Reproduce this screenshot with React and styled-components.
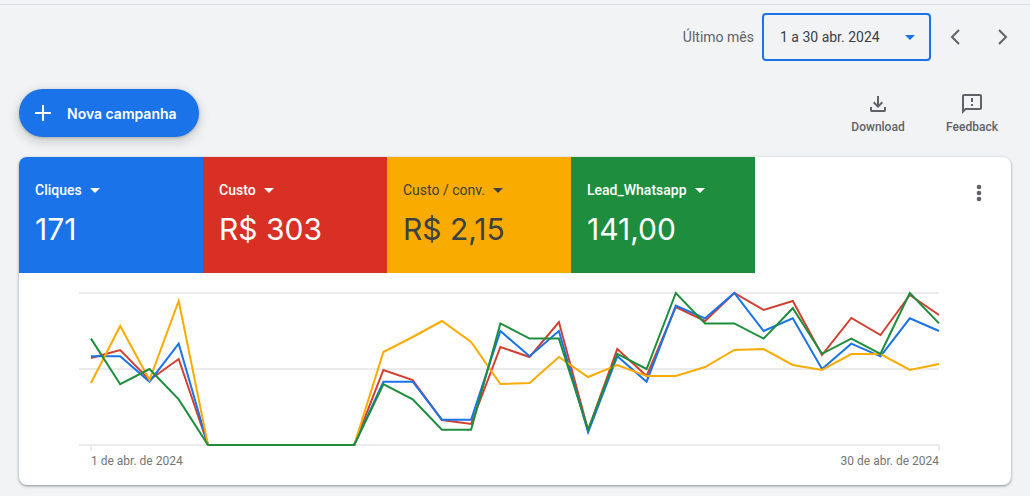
import React, { useState } from 'react'
import styled, { createGlobalStyle } from 'styled-components'

const GlobalStyle = createGlobalStyle`
  * {
    box-sizing: border-box;
  }

  body {
    margin: 0;
    background: #f1f3f4;
    font-family: Roboto, "Liberation Sans", sans-serif;
    font-size: 14px;
    color: #5f6368;
  }

  button,
  select {
    margin: 0;
    padding: 0;
    border: 0;
    background: none;
    color: inherit;
    font: inherit;
    cursor: pointer;
  }

  svg {
    display: block;
    flex: none;
  }
`

const Page = styled.main`
  margin-top: 4px;
  padding-bottom: 11px;
  border-top: 1px solid #dadce0;
`

const DateBar = styled.div`
  display: flex;
  align-items: center;
  justify-content: flex-end;
  padding: 8px 3px 0 20px;
`

const DateLabel = styled.label`
  margin-right: 8px;
`

const Dropdown = styled.div`
  display: inline-grid;
  align-items: center;

  select,
  svg {
    grid-area: 1 / 1;
  }

  select {
    appearance: none;
    outline: none;
    line-height: 20px;
  }

  svg {
    justify-self: end;
    pointer-events: none;
  }
`

const DateDropdown = styled(Dropdown)`
  width: 169px;
  height: 48px;
  border: 2px solid #1a73e8;
  border-radius: 4px;
  color: #1a73e8;

  select {
    height: 44px;
    padding-left: 16px;
    color: #3c4043;
  }

  svg {
    margin-right: 14px;
  }
`

const ArrowButton = styled.button`
  display: grid;
  place-items: center;
  width: 48px;
  height: 48px;
`

const ActionBar = styled.div`
  display: flex;
  align-items: center;
  justify-content: space-between;
  padding: 28px 31px 20px 19px;
`

const NewCampaign = styled.button`
  display: flex;
  align-items: center;
  gap: 16px;
  height: 48px;
  padding: 0 22px 0 16px;
  border-radius: 24px;
  background: #1a73e8;
  box-shadow: 0 1px 3px rgba(60, 64, 67, 0.3), 0 4px 8px 3px rgba(60, 64, 67, 0.15);
  color: #fff;
  font-family: Inter, sans-serif;
  font-weight: 600;
`

const Actions = styled.div`
  display: flex;
  gap: 40px;
  padding-top: 1px;
`

const Action = styled.button`
  display: flex;
  flex-direction: column;
  align-items: center;
  gap: 3px;
  min-width: 54px;
  font-size: 12px;
  font-weight: 500;
  line-height: 16px;
`

const Card = styled.section`
  margin: 0 19px;
  border-radius: 8px;
  background: #fff;
  box-shadow: 0 1px 2px rgba(60, 64, 67, 0.4), 0 1px 3px 1px rgba(60, 64, 67, 0.15);
  overflow: hidden;
`

const Metrics = styled.div`
  display: flex;
  align-items: flex-start;
`

const Metric = styled.div`
  flex: 0 1 184px;
  height: 116px;
  padding: 23px 16px;
  background: ${props => props.$color};
  color: ${props => (props.$dark ? '#3c4043' : '#fff')};

  select {
    padding-right: 18px;
    font-weight: ${props => (props.$dark ? 400 : 500)};
  }

  option {
    color: #3c4043;
  }
`

const MetricValue = styled.div`
  margin-top: 9px;
  font-family: Inter, sans-serif;
  font-size: 30px;
  line-height: 40px;
  white-space: nowrap;
`

const MoreButton = styled.button`
  display: grid;
  place-items: center;
  width: 40px;
  height: 40px;
  margin: 16px 12px 0 auto;
`

const Chart = styled.div`
  padding: 16px 72px 14px 60px;
`

const Plot = styled.svg`
  width: 100%;
  height: 162px;
  overflow: visible;

  path {
    fill: none;
    vector-effect: non-scaling-stroke;
  }
`

const Dates = styled.div`
  display: flex;
  justify-content: space-between;
  padding-left: 12px;
  color: #757575;
  font-size: 12px;
  line-height: 20px;
`

const metrics = [
  { name: 'Cliques', value: '171', color: '#1a73e8' },
  { name: 'Custo', value: 'R$ 303', color: '#d93025' },
  { name: 'Custo / conv.', value: 'R$ 2,15', color: '#f9ab00', dark: true },
  { name: 'Lead_Whatsapp', value: '141,00', color: '#1e8e3e' },
]

// one point per day of the month, later series are drawn on top
const series = [
  {
    color: '#d23f31',
    max: 152,
    points: [87, 95, 65, 86, 0, 0, 0, 0, 0, 0, 75, 65, 25, 21, 98, 88, 123, 15, 96, 69, 138, 124, 152, 135, 144, 90, 127, 110, 150, 130],
  },
  {
    color: '#1a73e8',
    max: 12,
    points: [7, 7, 5, 8, 0, 0, 0, 0, 0, 0, 5, 5, 2, 2, 9, 7, 9, 1, 7, 5, 11, 10, 12, 9, 10, 6, 8, 7, 10, 9],
  },
  {
    color: '#f9ab00',
    max: 152,
    points: [62, 119, 65, 144, 0, 0, 0, 0, 0, 0, 93, 108, 124, 103, 61, 62, 88, 68, 80, 69, 69, 78, 95, 96, 80, 75, 91, 91, 75, 81],
  },
  {
    color: '#1e8e3e',
    max: 10,
    points: [7, 4, 5, 3, 0, 0, 0, 0, 0, 0, 4, 3, 1, 1, 8, 7, 7, 1, 6, 5, 10, 8, 8, 7, 9, 6, 7, 6, 10, 8],
  },
]

const toPath = ({ points, max }) =>
  points
    .map((point, i) => {
      const x = 12 + (i * 848) / (points.length - 1)
      const y = 156 - (point / max) * 152
      return `${i ? 'L' : 'M'}${x.toFixed(1)} ${y.toFixed(1)}`
    })
    .join('')

const Caret = () => (
  <svg width="10" height="6" viewBox="0 0 10 6" fill="currentColor" aria-hidden="true">
    <path d="M0 1h10L5 6z" />
  </svg>
)

const MetricTile = ({ metric }) => {
  const [selected, setSelected] = useState(metric.name)

  return (
    <Metric $color={metric.color} $dark={metric.dark}>
      <Dropdown>
        <select aria-label={metric.name} value={selected} onChange={evt => setSelected(evt.target.value)}>
          <option>{metric.name}</option>
        </select>
        <Caret />
      </Dropdown>
      <MetricValue>{metric.value}</MetricValue>
    </Metric>
  )
}

const App = () => {
  return (
    <Page>
      <GlobalStyle />
      <DateBar>
        <DateLabel htmlFor="period">Último mês</DateLabel>
        <DateDropdown>
          <select id="period">
            <option>1 a 30 abr. 2024</option>
          </select>
          <Caret />
        </DateDropdown>
        <ArrowButton type="button" aria-label="Anterior">
          <svg width="10" height="16" viewBox="0 0 10 16" fill="none" stroke="currentColor" strokeWidth="2">
            <path d="M9 1L2 8l7 7" />
          </svg>
        </ArrowButton>
        <ArrowButton type="button" aria-label="Próximo">
          <svg width="10" height="16" viewBox="0 0 10 16" fill="none" stroke="currentColor" strokeWidth="2">
            <path d="M1 1l7 7-7 7" />
          </svg>
        </ArrowButton>
      </DateBar>

      <ActionBar>
        <NewCampaign type="button">
          <svg width="16" height="16" viewBox="0 0 16 16" fill="currentColor" aria-hidden="true">
            <path d="M7 0h2v7h7v2H9v7H7V9H0V7h7z" />
          </svg>
          Nova campanha
        </NewCampaign>
        <Actions>
          <Action type="button">
            <svg width="24" height="24" viewBox="0 0 24 24" fill="currentColor" aria-hidden="true">
              <path d="M12 16l-5-5 1.400-1.450 2.600 2.600V4h2v8.150l2.600-2.600L17 11zM6 20q-.825 0-1.413-.587Q4 18.825 4 18v-3h2v3h12v-3h2v3q0 .825-.587 1.413Q18.825 20 18 20z" />
            </svg>
            Download
          </Action>
          <Action type="button">
            <svg width="24" height="24" viewBox="0 0 24 24" fill="currentColor" aria-hidden="true">
              <path d="M20 2H4c-1.100 0-1.990.9-1.990 2L2 22l4-4h14c1.100 0 2-.9 2-2V4c0-1.100-.9-2-2-2zm0 14H5.170L4 17.170V4h16v12zM11 12h2v2h-2zm0-6h2v4h-2z" />
            </svg>
            Feedback
          </Action>
        </Actions>
      </ActionBar>

      <Card>
        <Metrics>
          {metrics.map(metric => (
            <MetricTile key={metric.name} metric={metric} />
          ))}
          <MoreButton type="button" aria-label="Mais opções">
            <svg width="6" height="18" viewBox="0 0 6 18" fill="currentColor">
              <circle cx="3" cy="3" r="2.300" />
              <circle cx="3" cy="9" r="2.300" />
              <circle cx="3" cy="15" r="2.300" />
            </svg>
          </MoreButton>
        </Metrics>
        <Chart>
          <Plot viewBox="0 0 860 162" preserveAspectRatio="none" aria-hidden="true">
            <path d="M0 4h860M0 80h860M0 156h860M12 156v6M860 156v6" stroke="#ebebeb" strokeWidth="2" />
            {series.map(line => (
              <path key={line.color} d={toPath(line)} stroke={line.color} strokeWidth="2" />
            ))}
          </Plot>
          <Dates>
            <span>1 de abr. de 2024</span>
            <span>30 de abr. de 2024</span>
          </Dates>
        </Chart>
      </Card>
    </Page>
  )
}

export default App
